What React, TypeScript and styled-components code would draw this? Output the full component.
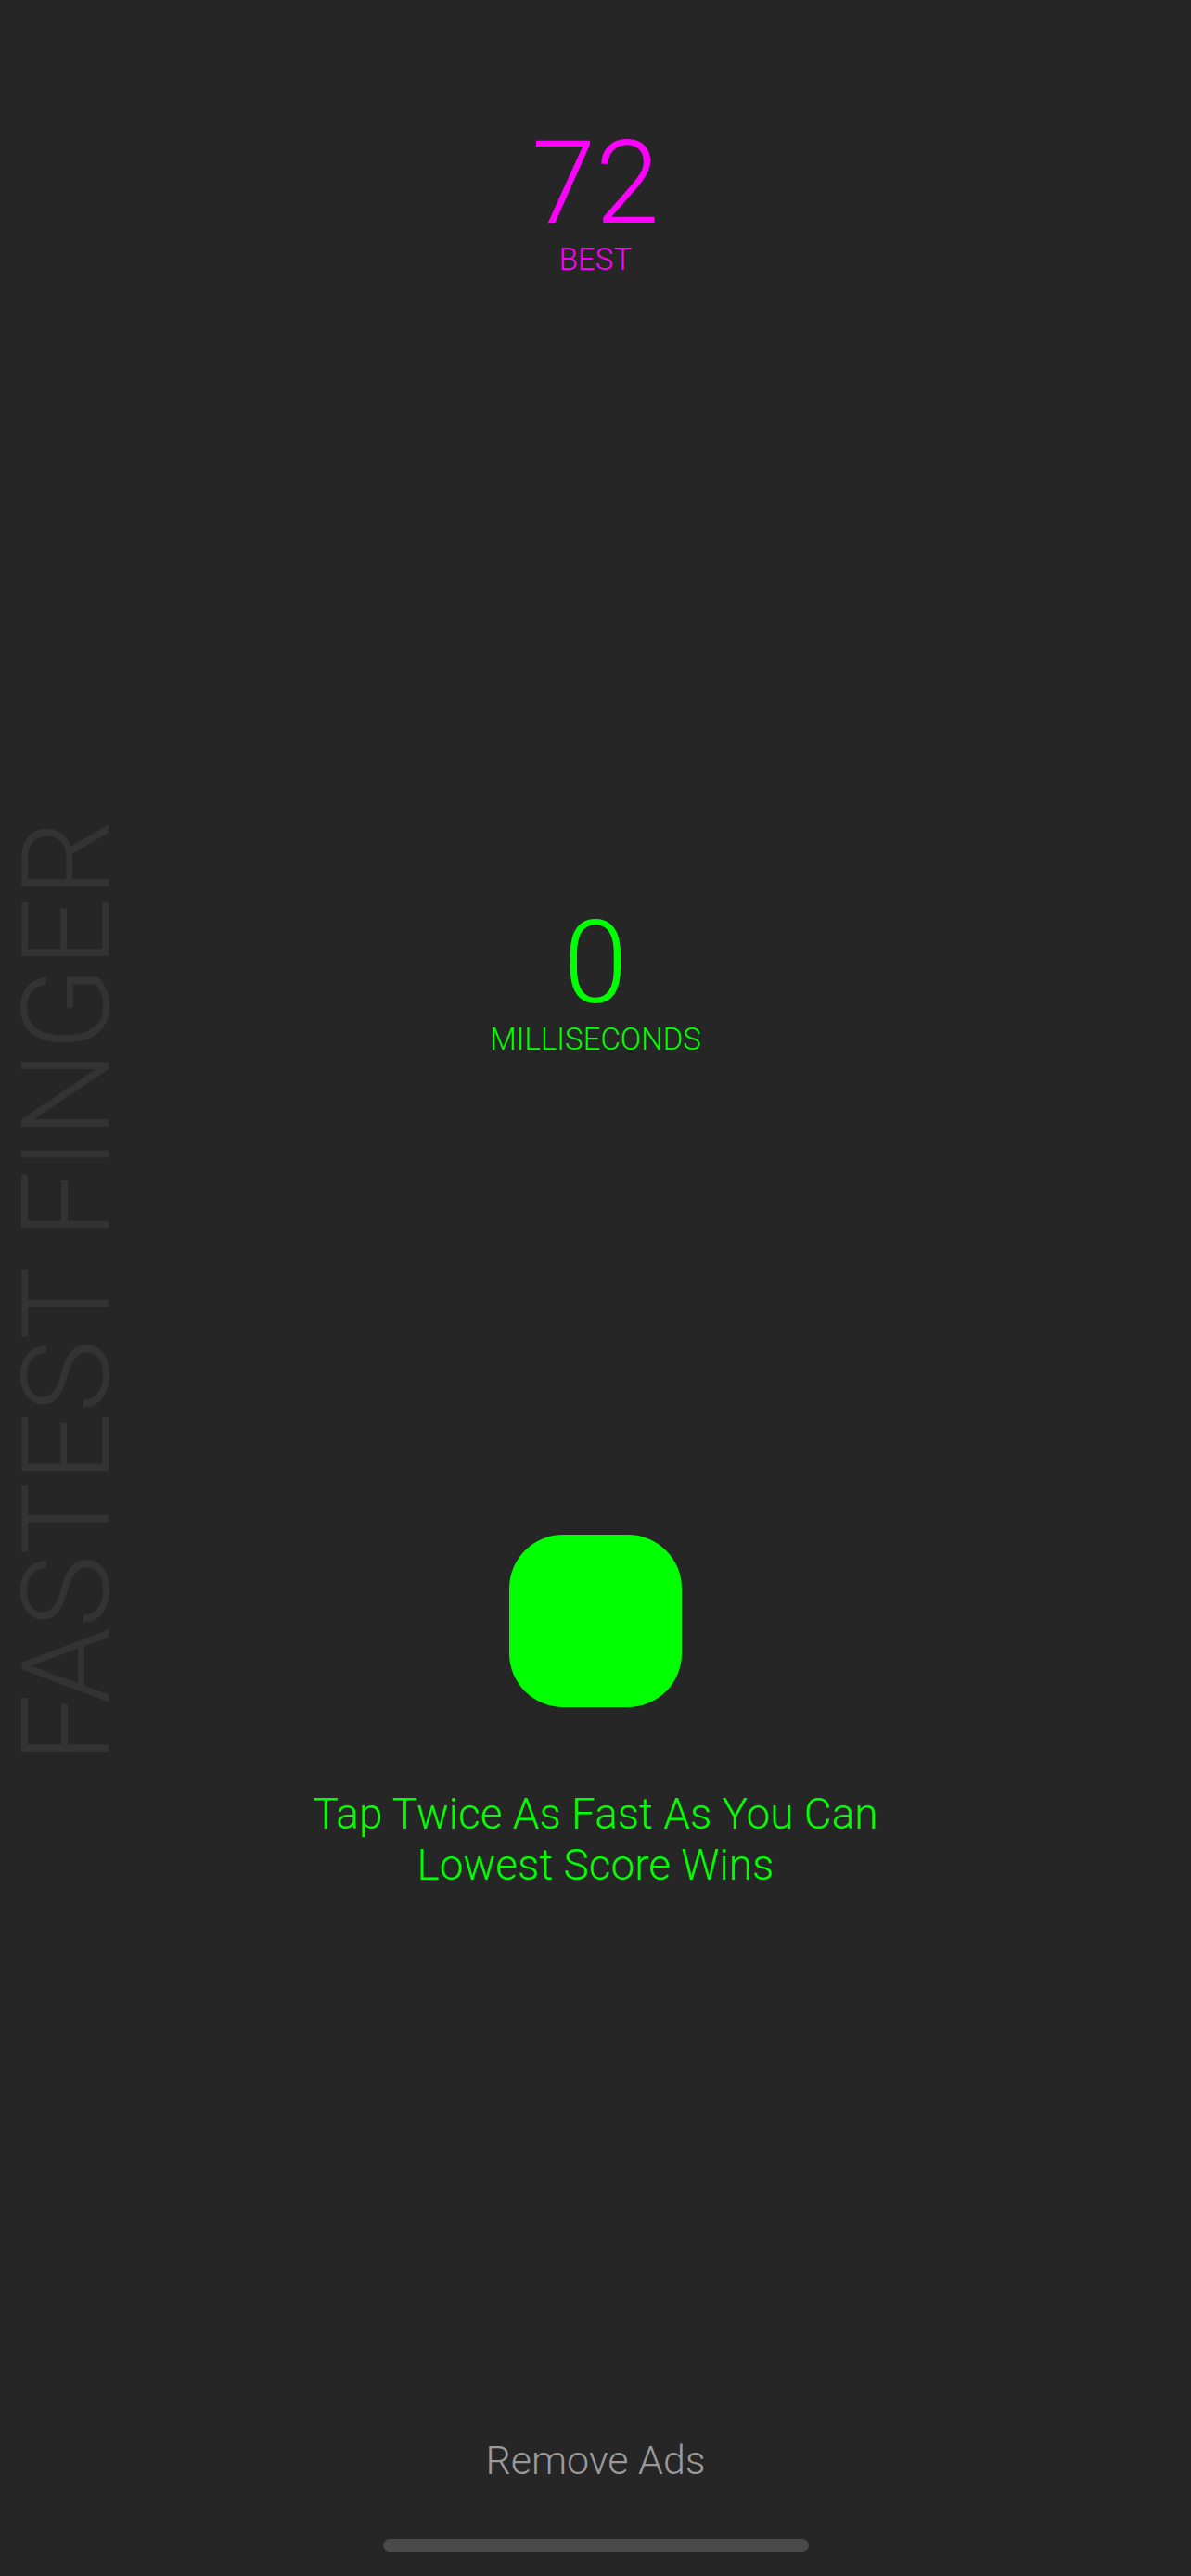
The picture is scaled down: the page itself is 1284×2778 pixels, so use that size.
import React from "react";
import styled, { createGlobalStyle } from "styled-components";

const GlobalStyle = createGlobalStyle`
  html, body {
    margin: 0;
    padding: 0;
    background: #262626;
  }
  body {
    font-family: Roboto, "Liberation Sans", sans-serif;
  }
`;

const Screen = styled.div`
  width: 1284px;
  height: 2778px;
  background: #262626;
  display: grid;
  overflow: hidden;
`;

const SideLabelWrap = styled.div`
  grid-area: 1 / 1;
  display: flex;
  align-items: flex-start;
  padding-top: 884px;
  padding-left: 6px;
`;

const SideLabel = styled.div`
  writing-mode: vertical-rl;
  transform: rotate(180deg);
  font-size: 132px;
  font-weight: 300;
  line-height: 1;
  color: #333333;
  white-space: nowrap;
`;

const Main = styled.div`
  grid-area: 1 / 1;
  display: flex;
  flex-direction: column;
  align-items: center;
  padding-top: 136px;
`;

const Score = styled.div<{ color: string; top?: number }>`
  display: flex;
  flex-direction: column;
  align-items: center;
  color: ${(p) => p.color};
  margin-top: ${(p) => p.top ?? 0}px;
`;

const BigNumber = styled.div`
  font-size: 124px;
  font-weight: 300;
  line-height: 1;
`;

const Caption = styled.div`
  font-size: 33px;
  font-weight: 300;
  line-height: 1;
  margin-top: 3px;
`;

const TapButton = styled.button`
  width: 186px;
  height: 186px;
  border: none;
  border-radius: 58px;
  background: #00ff00;
  margin-top: 518px;
  padding: 0;
  cursor: pointer;
`;

const Instructions = styled.div`
  margin-top: 88px;
  color: #00ff00;
  font-size: 46px;
  font-weight: 300;
  line-height: 55px;
  text-align: center;
`;

const RemoveAds = styled.div`
  margin-top: 593px;
  color: #9a9a9a;
  font-size: 43px;
  font-weight: 300;
  line-height: 1;
`;

const HomeIndicator = styled.div`
  margin-top: 63px;
  width: 459px;
  height: 14px;
  border-radius: 7px;
  background: #4a4a4a;
`;

export default function App() {
  return (
    <>
      <GlobalStyle />
      <Screen>
        <SideLabelWrap>
          <SideLabel>FASTEST FINGER</SideLabel>
        </SideLabelWrap>
        <Main>
          <Score color="#ff00ff">
            <BigNumber>72</BigNumber>
            <Caption>BEST</Caption>
          </Score>
          <Score color="#00ff00" top={681}>
            <BigNumber>0</BigNumber>
            <Caption>MILLISECONDS</Caption>
          </Score>
          <TapButton aria-label="tap" />
          <Instructions>
            Tap Twice As Fast As You Can
            <br />
            Lowest Score Wins
          </Instructions>
          <RemoveAds>Remove Ads</RemoveAds>
          <HomeIndicator />
        </Main>
      </Screen>
    </>
  );
}
